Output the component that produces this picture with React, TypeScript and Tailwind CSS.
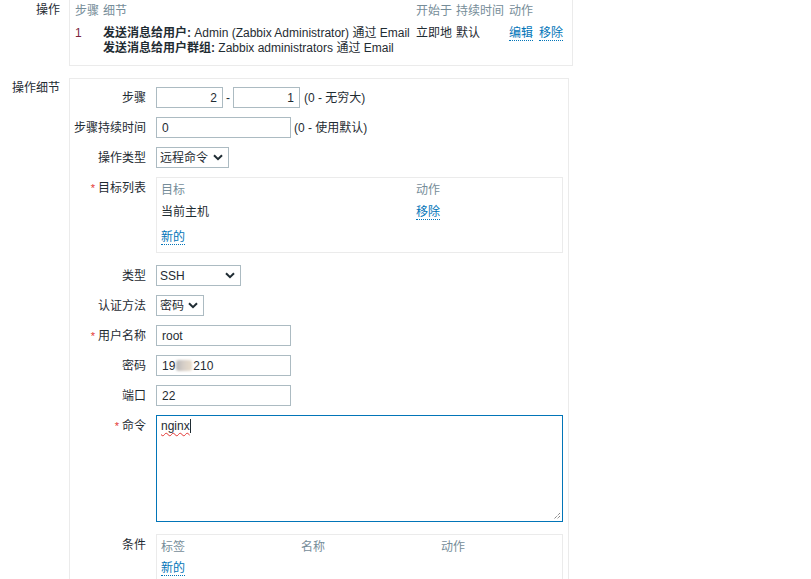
import React from "react";

const font = { fontFamily: '"Liberation Sans", Arial, "Noto Sans CJK SC", sans-serif' };

function Chevron() {
  return (
    <svg width="10" height="7" viewBox="0 0 10 7" className="shrink-0">
      <path d="M1 1.2 L5 5.2 L9 1.2" fill="none" stroke="#1f2c33" strokeWidth="2" />
    </svg>
  );
}

function Link({ children }: { children: React.ReactNode }) {
  return (
    <span className="text-[#0275b8] border-b border-dotted border-[#0275b8] leading-[14px] inline-block">
      {children}
    </span>
  );
}

function Req() {
  return <span className="text-[#e33734] mr-[3px] text-[11px]">*</span>;
}

function Row({
  label,
  req,
  children,
  className = "",
}: {
  label: string;
  req?: boolean;
  children: React.ReactNode;
  className?: string;
}) {
  return (
    <div className={"flex " + className}>
      <div className="w-[76px] shrink-0 text-right pt-[4px] leading-[15px] text-[#1f2c33] whitespace-nowrap">
        {req && <Req />}
        {label}
      </div>
      <div className="ml-[10px] flex-1 min-w-0">{children}</div>
    </div>
  );
}

function TextBox({ value, w, right }: { value: React.ReactNode; w: string; right?: boolean }) {
  return (
    <div
      className={
        "h-[21px] border border-[#acbbc2] bg-white flex items-center px-[5px] text-[#1f2c33] " +
        w +
        (right ? " justify-end" : "")
      }
    >
      {value}
    </div>
  );
}

function Select({ value, w }: { value: string; w: string }) {
  return (
    <div
      className={
        "h-[21px] border border-[#acbbc2] bg-white flex items-center justify-between pl-[3px] pr-[5px] text-[#1f2c33] " +
        w
      }
    >
      <span>{value}</span>
      <Chevron />
    </div>
  );
}

export default function App() {
  return (
    <div className="w-[811px] h-[579px] overflow-hidden bg-white text-[12px] text-[#1f2c33]" style={font}>
      {/* 操作 */}
      <div className="flex">
        <div className="w-[60px] shrink-0 text-right pt-[3px] leading-[15px]">操作</div>
        <div className="ml-[9px] w-[504px] h-[66px] border border-[#ebebeb] border-t-0 bg-white pl-[5px]">
          <div className="grid grid-cols-[28px_313px_40px_53px_auto] leading-[15px]">
            <div className="text-[#768d99] pt-[4px]">步骤</div>
            <div className="text-[#768d99] pt-[4px]">细节</div>
            <div className="text-[#768d99] pt-[4px] whitespace-nowrap">开始于</div>
            <div className="text-[#768d99] pt-[4px] whitespace-nowrap">持续时间</div>
            <div className="text-[#768d99] pt-[4px]">动作</div>

            <div className="text-[#7a2540] pt-[7px]">1</div>
            <div className="pt-[7px] whitespace-nowrap">
              <div>
                <span className="font-bold">发送消息给用户:</span> Admin (Zabbix Administrator) 通过 Email
              </div>
              <div>
                <span className="font-bold">发送消息给用户群组:</span> Zabbix administrators 通过 Email
              </div>
            </div>
            <div className="pt-[7px] whitespace-nowrap">立即地</div>
            <div className="pt-[7px]">默认</div>
            <div className="pt-[7px] whitespace-nowrap flex gap-[6px] items-start">
              <Link>编辑</Link>
              <Link>移除</Link>
            </div>
          </div>
        </div>
      </div>

      {/* 操作细节 */}
      <div className="flex mt-[12px]">
        <div className="w-[60px] shrink-0 text-right pt-[3px] leading-[15px]">操作细节</div>
        <div className="ml-[9px] w-[500px] h-[520px] border border-[#ebebeb] border-b-0 bg-white pt-[8px]">
          <Row label="步骤">
            <div className="flex items-center">
              <TextBox value="2" w="w-[67px]" right />
              <span className="mx-[3px]">-</span>
              <TextBox value="1" w="w-[67px]" right />
              <span className="ml-[4px]">(0 - 无穷大)</span>
            </div>
          </Row>
          <Row label="步骤持续时间" className="mt-[9px]">
            <div className="flex items-center">
              <TextBox value="0" w="w-[135px]" />
              <span className="ml-[3px]">(0 - 使用默认)</span>
            </div>
          </Row>
          <Row label="操作类型" className="mt-[9px]">
            <Select value="远程命令" w="w-[73px]" />
          </Row>
          <Row label="目标列表" req className="mt-[9px]">
            <div className="w-[407px] h-[76px] border border-[#ebebeb] pl-[4px] leading-[15px]">
              <div className="grid grid-cols-[255px_auto] pt-[5px]">
                <div className="text-[#768d99]">目标</div>
                <div className="text-[#768d99]">动作</div>
                <div className="pt-[7px]">当前主机</div>
                <div className="pt-[7px]">
                  <Link>移除</Link>
                </div>
              </div>
              <div className="pt-[10px]">
                <Link>新的</Link>
              </div>
            </div>
          </Row>
          <Row label="类型" className="mt-[12px]">
            <Select value="SSH" w="w-[85px]" />
          </Row>
          <Row label="认证方法" className="mt-[9px]">
            <Select value="密码" w="w-[48px]" />
          </Row>
          <Row label="用户名称" req className="mt-[9px]">
            <TextBox value="root" w="w-[135px]" />
          </Row>
          <Row label="密码" className="mt-[9px]">
            <TextBox
              value={
                <span className="flex items-center">
                  19
                  <span className="inline-block w-[16px] h-[11px] mx-[1px] rounded-[3px] bg-gradient-to-r from-[#b8b8b8] via-[#d8d0c8] to-[#e8dccb] blur-[1px]" />
                  210
                </span>
              }
              w="w-[135px]"
            />
          </Row>
          <Row label="端口" className="mt-[9px]">
            <TextBox value="22" w="w-[135px]" />
          </Row>
          <Row label="命令" req className="mt-[9px]">
            <div className="relative w-[407px] h-[107px] border border-[#0275b8] bg-white px-[4px] pt-[3px] leading-[15px]">
              <span className="underline decoration-wavy decoration-[#e33734] decoration-1 underline-offset-[2px]">
                nginx
              </span>
              <span className="inline-block w-px h-[14px] bg-[#1f2c33] align-[-3px]" />
              <svg width="9" height="9" viewBox="0 0 9 9" className="absolute right-[1px] bottom-[1px]">
                <path d="M8 2 L2 8 M8 5 L5 8" stroke="#555" strokeWidth="1" strokeDasharray="1 1" />
              </svg>
            </div>
          </Row>
          <Row label="条件" className="mt-[12px]">
            <div className="w-[407px] h-[60px] border border-[#ebebeb] pl-[4px] leading-[15px]">
              <div className="grid grid-cols-[140px_140px_auto] pt-[5px] text-[#768d99]">
                <div>标签</div>
                <div>名称</div>
                <div>动作</div>
              </div>
              <div className="pt-[6px]">
                <Link>新的</Link>
              </div>
            </div>
          </Row>
        </div>
      </div>
    </div>
  );
}
